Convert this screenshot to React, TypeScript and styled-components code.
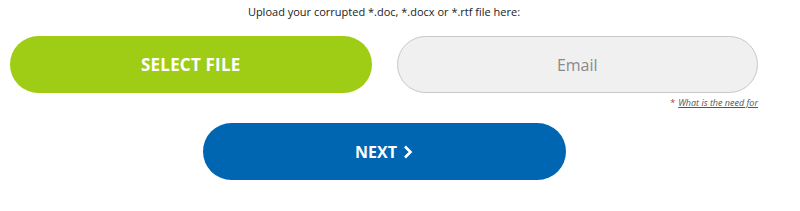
import React from "react";
import styled, { createGlobalStyle } from "styled-components";

const Global = createGlobalStyle`
  html, body { margin: 0; padding: 0; background: #fff; }
  body { font-family: "Open Sans", "Noto Sans", sans-serif; }
  * { box-sizing: border-box; }
`;

const Wrap = styled.div`
  width: 748px;
  margin-left: 10px;
  display: flex;
  flex-direction: column;
  align-items: stretch;
`;

const Title = styled.div`
  text-align: center;
  font-size: 11px;
  color: #222;
  line-height: 16px;
  padding-top: 4px;
  height: 36px;
`;

const Row = styled.div`
  display: grid;
  grid-template-columns: 1fr 1fr;
  column-gap: 25px;
`;

const Col = styled.div`
  display: flex;
  flex-direction: column;
`;

const Pill = styled.button<{ $bg: string; $size?: number }>`
  height: 57px;
  border: none;
  border-radius: 29px;
  background: ${(p) => p.$bg};
  color: #fff;
  font-family: "Open Sans", "Noto Sans", sans-serif;
  font-weight: 700;
  font-size: ${(p) => p.$size ?? 16}px;
  letter-spacing: ${(p) => (p.$size && p.$size > 16 ? "0.2px" : "0")};
  display: flex;
  align-items: center;
  justify-content: center;
  gap: 6px;
  padding: 0;
  cursor: pointer;
`;

const EmailInput = styled.input`
  height: 57px;
  border: 1px solid #c8c8c8;
  border-radius: 29px;
  background: #f0f0f0;
  font-family: "Open Sans", "Noto Sans", sans-serif;
  font-size: 16px;
  text-align: center;
  color: #333;
  outline: none;
  &::placeholder { color: #8a8a8a; }
`;

const Note = styled.div`
  text-align: right;
  font-size: 9px;
  line-height: 12px;
  margin-top: 4px;
  color: #555;
  font-style: italic;
  & span.star { color: #c0392b; font-style: normal; margin-right: 3px; }
  & a { color: #555; text-decoration: underline; }
`;

const NextRow = styled.div`
  display: flex;
  justify-content: center;
  margin-top: 14px;
`;

const NextBtn = styled(Pill)`
  width: 363px;
`;

export default function App() {
  return (
    <>
      <Global />
      <Wrap>
        <Title>Upload your corrupted *.doc, *.docx or *.rtf file here:</Title>
        <Row>
          <Col>
            <Pill $bg="#9fcd15" $size={17}>SELECT FILE</Pill>
          </Col>
          <Col>
            <EmailInput placeholder="Email" />
            <Note>
              <span className="star">*</span>
              <a href="#">What is the need for</a>
            </Note>
          </Col>
        </Row>
        <NextRow>
          <NextBtn $bg="#0066b1">
            NEXT
            <svg width="10" height="14" viewBox="0 0 10 14">
              <path d="M2 1.5 L7.5 7 L2 12.5" fill="none" stroke="#fff" strokeWidth="2.6" />
            </svg>
          </NextBtn>
        </NextRow>
      </Wrap>
    </>
  );
}
